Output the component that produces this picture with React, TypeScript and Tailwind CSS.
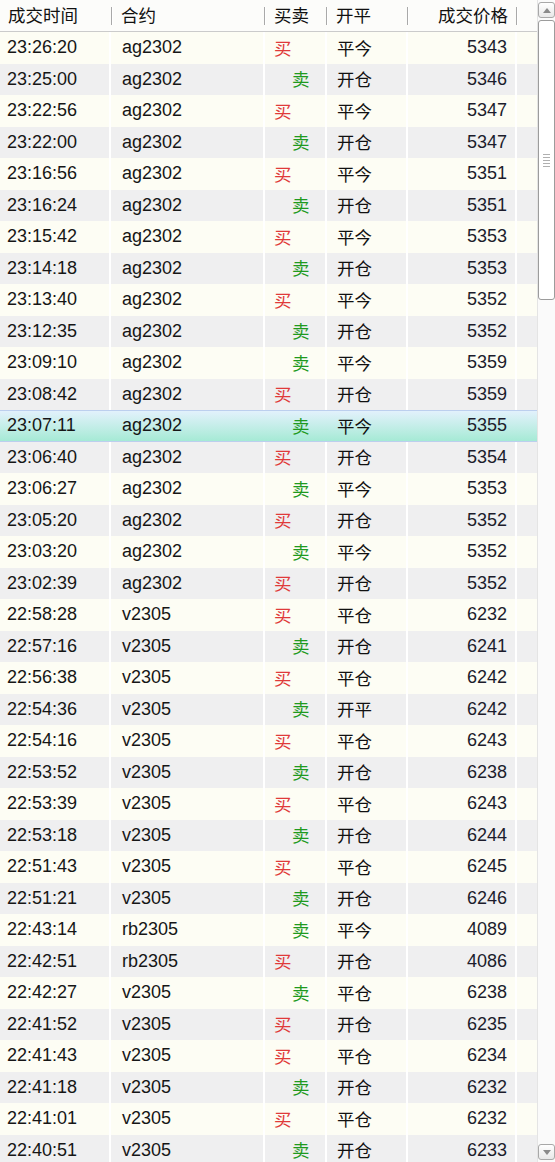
import React from 'react';

type Trade = {
  time: string;
  code: string;
  side: 'buy' | 'sell';
  action: string;
  price: number;
};

const trades: Trade[] = [
  { time: '23:26:20', code: 'ag2302', side: 'buy', action: '平今', price: 5343 },
  { time: '23:25:00', code: 'ag2302', side: 'sell', action: '开仓', price: 5346 },
  { time: '23:22:56', code: 'ag2302', side: 'buy', action: '平今', price: 5347 },
  { time: '23:22:00', code: 'ag2302', side: 'sell', action: '开仓', price: 5347 },
  { time: '23:16:56', code: 'ag2302', side: 'buy', action: '平今', price: 5351 },
  { time: '23:16:24', code: 'ag2302', side: 'sell', action: '开仓', price: 5351 },
  { time: '23:15:42', code: 'ag2302', side: 'buy', action: '平今', price: 5353 },
  { time: '23:14:18', code: 'ag2302', side: 'sell', action: '开仓', price: 5353 },
  { time: '23:13:40', code: 'ag2302', side: 'buy', action: '平今', price: 5352 },
  { time: '23:12:35', code: 'ag2302', side: 'sell', action: '开仓', price: 5352 },
  { time: '23:09:10', code: 'ag2302', side: 'sell', action: '平今', price: 5359 },
  { time: '23:08:42', code: 'ag2302', side: 'buy', action: '开仓', price: 5359 },
  { time: '23:07:11', code: 'ag2302', side: 'sell', action: '平今', price: 5355 },
  { time: '23:06:40', code: 'ag2302', side: 'buy', action: '开仓', price: 5354 },
  { time: '23:06:27', code: 'ag2302', side: 'sell', action: '平今', price: 5353 },
  { time: '23:05:20', code: 'ag2302', side: 'buy', action: '开仓', price: 5352 },
  { time: '23:03:20', code: 'ag2302', side: 'sell', action: '平今', price: 5352 },
  { time: '23:02:39', code: 'ag2302', side: 'buy', action: '开仓', price: 5352 },
  { time: '22:58:28', code: 'v2305', side: 'buy', action: '平仓', price: 6232 },
  { time: '22:57:16', code: 'v2305', side: 'sell', action: '开仓', price: 6241 },
  { time: '22:56:38', code: 'v2305', side: 'buy', action: '平仓', price: 6242 },
  { time: '22:54:36', code: 'v2305', side: 'sell', action: '开平', price: 6242 },
  { time: '22:54:16', code: 'v2305', side: 'buy', action: '平仓', price: 6243 },
  { time: '22:53:52', code: 'v2305', side: 'sell', action: '开仓', price: 6238 },
  { time: '22:53:39', code: 'v2305', side: 'buy', action: '平仓', price: 6243 },
  { time: '22:53:18', code: 'v2305', side: 'sell', action: '开仓', price: 6244 },
  { time: '22:51:43', code: 'v2305', side: 'buy', action: '平仓', price: 6245 },
  { time: '22:51:21', code: 'v2305', side: 'sell', action: '开仓', price: 6246 },
  { time: '22:43:14', code: 'rb2305', side: 'sell', action: '平今', price: 4089 },
  { time: '22:42:51', code: 'rb2305', side: 'buy', action: '开仓', price: 4086 },
  { time: '22:42:27', code: 'v2305', side: 'sell', action: '平仓', price: 6238 },
  { time: '22:41:52', code: 'v2305', side: 'buy', action: '开仓', price: 6235 },
  { time: '22:41:43', code: 'v2305', side: 'buy', action: '平仓', price: 6234 },
  { time: '22:41:18', code: 'v2305', side: 'sell', action: '开仓', price: 6232 },
  { time: '22:41:01', code: 'v2305', side: 'buy', action: '平仓', price: 6232 },
  { time: '22:40:51', code: 'v2305', side: 'sell', action: '开仓', price: 6233 },
];

const SELECTED = 12;
const cjk = '[font-family:"Noto_Sans_CJK_SC",sans-serif]';

function HeaderCell({ label, width, right }: { label: string; width: string; right?: boolean }) {
  return (
    <div className={`${width} flex items-center h-full`}>
      <span className={`${right ? 'ml-auto mr-[8px]' : 'ml-[8px]'} text-[17.5px] ${cjk} text-[#111]`}>{label}</span>
      {!right && <div className="ml-auto w-[2px] h-[18px] border-l border-[#a9a9a9] bg-white" />}
      {right && <div className="w-[2px] h-[18px] border-l border-[#a9a9a9] bg-white" />}
    </div>
  );
}

function Row({ t, index }: { t: Trade; index: number }) {
  const selected = index === SELECTED;
  const bg = index % 2 === 0 ? 'bg-[#fdfdf4]' : 'bg-[#efeff0]';
  const sep = selected ? 'border-r-2 border-transparent' : 'border-r-2 border-white';

  return (
    <div
      className={`h-[31.5px] shrink-0 flex text-[18px] text-[#161616] ${
        selected
          ? 'bg-gradient-to-b from-[#e2f1fc] to-[#a5ead5] border-y border-[#bccfee]'
          : bg
      }`}
    >
      <div className={`w-[111px] ${sep} flex items-center pl-[7px]`}>{t.time}</div>
      <div className={`w-[154px] ${sep} flex items-center pl-[11px]`}>{t.code}</div>
      <div className={`w-[62px] ${sep} flex items-center ${t.side === 'buy' ? 'pl-[9px]' : 'pl-[27px]'}`}>
        <span
          className={`text-[17.5px] ${cjk} ${
            t.side === 'buy' ? 'text-[#e03a3a]' : 'text-[#1f9a1f]'
          }`}
        >
          {t.side === 'buy' ? '买' : '卖'}
        </span>
      </div>
      <div className={`w-[81px] ${sep} flex items-center pl-[10px]`}>
        <span className={`text-[17.5px] ${cjk} text-[#111]`}>{t.action}</span>
      </div>
      <div className={`w-[109px] ${sep} flex items-center justify-end pr-[8px] text-[#1c1c2c]`}>{t.price}</div>
      <div className="flex-1" />
    </div>
  );
}

function Scrollbar() {
  return (
    <div className="w-[18px] h-full flex flex-col bg-[#fafafa] border-l border-[#e4e4e4]">
      <div className="mt-[2px] h-[16px] rounded-[3px] border border-[#a8a8a8] bg-gradient-to-b from-white to-[#e8e8e8] flex items-center justify-center">
        <svg width="8" height="5" viewBox="0 0 8 5">
          <path d="M0 5 L4 0 L8 5 Z" fill="#8a8a8a" />
        </svg>
      </div>
      <div className="mt-[2px] h-[280px] rounded-[3px] border border-[#9c9c9c] bg-white flex items-center justify-center">
        <div className="flex flex-col gap-[2px]">
          {[0, 1, 2, 3, 4].map((i) => (
            <div key={i} className="w-[7px] h-px bg-[#b0b0b0]" />
          ))}
        </div>
      </div>
      <div className="flex-1" />
      <div className="mb-[2px] h-[16px] rounded-[3px] border border-[#a8a8a8] bg-gradient-to-b from-white to-[#e8e8e8] flex items-center justify-center">
        <svg width="8" height="5" viewBox="0 0 8 5">
          <path d="M0 0 L4 5 L8 0 Z" fill="#8a8a8a" />
        </svg>
      </div>
    </div>
  );
}

export default function App() {
  return (
    <div className="w-[555px] h-[1162px] overflow-hidden flex bg-white [font-family:'Liberation_Sans',Arial,sans-serif]">
      <div className="w-[537px] h-full flex flex-col overflow-hidden">
        <div className="h-[32px] shrink-0 flex bg-[#fcfcfa] border-b border-[#cbcbcb]">
          <HeaderCell label="成交时间" width="w-[113px]" />
          <HeaderCell label="合约" width="w-[153px]" />
          <HeaderCell label="买卖" width="w-[62px]" />
          <HeaderCell label="开平" width="w-[81px]" />
          <HeaderCell label="成交价格" width="w-[109px]" right />
          <div className="flex-1" />
        </div>
        {trades.map((t, i) => (
          <Row key={i} t={t} index={i} />
        ))}
      </div>
      <Scrollbar />
    </div>
  );
}
